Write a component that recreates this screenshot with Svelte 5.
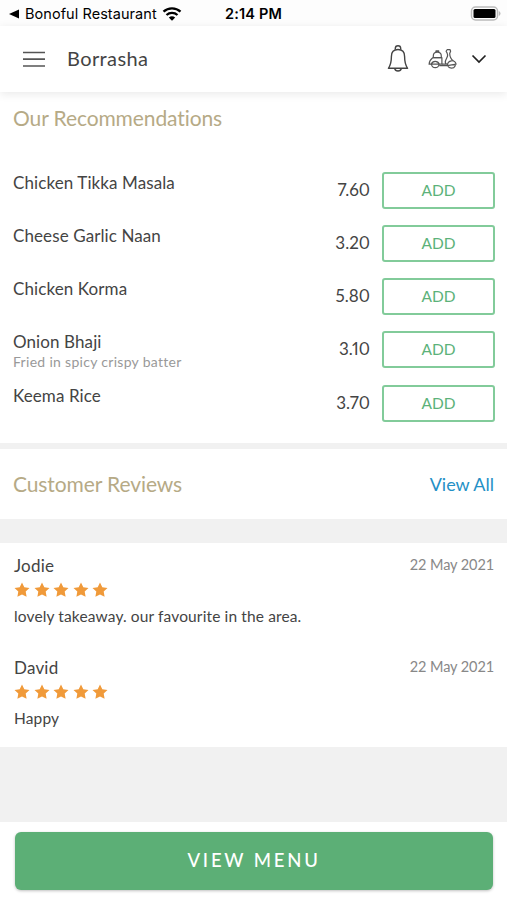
<script>
const recommendations = [
    { name: 'Chicken Tikka Masala', price: 7.6 },
    { name: 'Cheese Garlic Naan', price: 3.2 },
    { name: 'Chicken Korma', price: 5.8 },
    { name: 'Onion Bhaji', price: 3.1, note: 'Fried in spicy crispy batter' },
    { name: 'Keema Rice', price: 3.7 }
]

const reviews = [
    { author: 'Jodie', date: '22 May 2021', rating: 5, text: 'lovely takeaway. our favourite in the area.' },
    { author: 'David', date: '22 May 2021', rating: 5, text: 'Happy' }
]
</script>

<div class="screen">
    <div class="status">
        <div class="back">
            <svg width="10" height="10" viewBox="0 0 10 10"><path d="M10 0.5v9L0 5z" /></svg>
            <span>Bonoful Restaurant</span>
            <svg class="wifi" width="20" height="14" viewBox="0 0 20 14">
                <path d="M1.5 4.700a12.400 12.400 0 0 1 17 0M4.500 8a8.200 8.200 0 0 1 11 0" fill="none" stroke="#000" stroke-width="2.300" />
                <path d="M6.800 10.500a5 5 0 0 1 6.400 0L10 13.800z" />
            </svg>
        </div>
        <div class="clock">2:14 PM</div>
        <svg class="battery" width="31" height="15" viewBox="0 0 31 15">
            <rect x="1.500" y="1" width="26" height="13" rx="4" fill="#fff" stroke="#bbb" stroke-width="1.500" />
            <rect x="3.500" y="3" width="22" height="9" rx="1.500" />
            <path d="M28.800 5v5q1.700-.8 1.700-2.500T28.800 5z" fill="#bbb" />
        </svg>
    </div>

    <header>
        <svg class="burger" width="22" height="16" viewBox="0 0 22 16" stroke="#555" stroke-width="1.700"><path d="M0 1.500h22M0 8.200h22M0 15h22" /></svg>
        <h1>Borrasha</h1>
        <svg class="bell" width="24" height="30" viewBox="0 0 24 30" fill="none" stroke="#444" stroke-width="1.400" stroke-linejoin="round">
            <path d="M9.300 5.500V4.500a2.700 2.700 0 0 1 5.400 0v1" />
            <path d="M12 5.500c-4.200 0-6.600 2.800-6.600 7 0 5-.5 8.300-3 11.800h19.200c-2.500-3.500-3-6.800-3-11.800 0-4.200-2.400-7-6.600-7z" />
            <path d="M8.600 24.300a3.500 3.500 0 0 0 6.800 0" />
        </svg>
        <svg class="scooter" width="30" height="22" viewBox="0 0 30 22" fill="none" stroke="#555" stroke-width="1.200" stroke-linejoin="round">
            <path d="M5.300 9.700V8c0-2.300 1.600-3.900 4-3.900s4 1.600 4 3.900v1.700zM8 4.200V2.900h2.700v1.300" />
            <path d="M4.700 9.700h9.200v6.500h-2.700M4.700 9.700C2.500 11.300 1.300 13.600 1.100 16.200h2.200" />
            <path d="M3.200 16.200c.8-2 2.200-2.900 4-2.900s3.300.9 4.100 2.900zM3.500 16.500a3.800 3.800 0 0 0 7.500 0" />
            <path d="M11.200 17.700h8.200M14 16.200h4.600c-1.500-1-1.600-2.300-1-3.700l1.800-3.900c.5-1.300.1-2.700-.5-4l-.8-1.300 1-1.600h3l.5 1.500-.9 2.200c.1 3.100 1.200 5.700 3.700 7.400" />
            <path d="M19.400 17.700c0-2.600 1.600-4.600 4-4.900 2.300-.2 4.200 1.200 4.700 3.400zM19.800 17.800c1.200 3 5.900 3.200 7.300.1l.3-1.600" />
        </svg>
        <svg class="chevron" width="16" height="10" viewBox="0 0 16 10" fill="none" stroke="#222" stroke-width="1.700"><path d="M1.500 1.500L8 8l6.500-6.500" /></svg>
    </header>

    <section class="recommendations">
        <h2>Our Recommendations</h2>
        {#each recommendations as item}
        <div class="item">
            <div class="info">
                <div class="name">{item.name}</div>
                {#if item.note}<div class="note">{item.note}</div>{/if}
            </div>
            <div class="price">{item.price.toFixed(2)}</div>
            <button class="add">ADD</button>
        </div>
        {/each}
    </section>

    <section class="reviews-head">
        <h2>Customer Reviews</h2>
        <a href="#reviews">View All</a>
    </section>

    <section class="reviews" id="reviews">
        {#each reviews as review}
        <article>
            <div class="byline">
                <span class="author">{review.author}</span>
                <span class="date">{review.date}</span>
            </div>
            <div class="stars">
                {#each Array(review.rating) as _}
                <svg width="16" height="16" viewBox="0 0 16 16"><path d="M8 .5l2.300 4.700 5.200.7-3.800 3.600.9 5.300L8 12.400l-4.600 2.400.9-5.300L.5 5.900l5.200-.7z" /></svg>
                {/each}
            </div>
            <p>{review.text}</p>
        </article>
        {/each}
    </section>

    <footer>
        <button class="menu">VIEW MENU</button>
    </footer>
</div>

<style>
:global(body) {
    margin: 0;
    background: #f1f1f1;
}
.screen {
    display: flex;
    flex-direction: column;
    height: 900px;
    overflow: hidden;
    font-family: Lato, "Open Sans", sans-serif;
    font-variant-ligatures: none;
    color: #444;
}
h1, h2, p {
    margin: 0;
    font-weight: 400;
}
button {
    padding: 0;
    font-family: inherit;
    cursor: pointer;
}
section, footer {
    background: #fff;
}
.status {
    display: grid;
    grid-template-columns: 1fr auto 1fr;
    align-items: center;
    height: 26px;
    flex: none;
    box-sizing: border-box;
    padding: 1px 6px 0 9px;
    font-family: Inter, sans-serif;
    color: #000;
    background: #fdfdfd;
}
.back {
    display: flex;
    align-items: center;
    font-size: 14.5px;
    letter-spacing: 0.06px;
    white-space: nowrap;
}
.back span {
    margin: 0 5px 0 6px;
}
.clock {
    margin-right: 3px;
    font-size: 14.5px;
    font-weight: 600;
    letter-spacing: 0.15px;
}
.battery {
    justify-self: end;
}
header {
    display: flex;
    align-items: center;
    height: 66px;
    flex: none;
    padding: 0 20px 0 23px;
    background: #fff;
    box-shadow: 0 2px 9px rgba(0, 0, 0, 0.09);
    z-index: 1;
}
h1 {
    flex: 1;
    margin-left: 22px;
    padding-bottom: 2px;
    font-size: 20px;
    letter-spacing: 0.4px;
}
.bell {
    margin-right: 1px;
}
.scooter {
    margin: 0 13px 0 17px;
}
h2 {
    font-size: 21px;
    line-height: 26px;
    letter-spacing: -0.1px;
    color: #b6aa86;
}
.recommendations {
    height: 351px;
    flex: none;
    box-sizing: border-box;
    padding: 13px 12px 0 13px;
}
.recommendations h2 {
    margin-bottom: 42px;
}
.item {
    display: flex;
    height: 37px;
    margin-bottom: 16px;
}
.item:nth-of-type(4) {
    margin-bottom: 17px;
}
.info {
    flex: 1;
}
.name {
    font-size: 17px;
    line-height: 20px;
    letter-spacing: 0.1px;
}
.note {
    font-size: 14px;
    line-height: 20px;
    letter-spacing: 0.3px;
    color: #999;
}
.price {
    margin-right: 12px;
    font-size: 17px;
    font-variant-numeric: proportional-nums;
    line-height: 33px;
}
.add {
    width: 113px;
    height: 37px;
    margin-top: -1px;
    padding-bottom: 1px;
    border: 2px solid #82cb9a;
    border-radius: 3px;
    background: #fff;
    font-size: 15.5px;
    color: #5cb27a;
}
.reviews-head {
    display: flex;
    align-items: center;
    justify-content: space-between;
    height: 70px;
    flex: none;
    box-sizing: border-box;
    margin: 6px 0 24px;
    padding: 0 13px 1px;
}
.reviews-head a {
    font-size: 18px;
    color: #2490c6;
    text-decoration: none;
}
.reviews {
    height: 204px;
    flex: none;
    box-sizing: border-box;
    padding: 12px 13px 0 14px;
}
article {
    height: 102px;
}
.byline {
    display: flex;
    justify-content: space-between;
    line-height: 22px;
}
.author {
    font-size: 17px;
    letter-spacing: 0.2px;
}
.date {
    font-size: 14.5px;
    line-height: 19px;
    letter-spacing: -0.1px;
    color: #888;
}
.stars {
    display: flex;
    gap: 3.6px;
    height: 16px;
    margin-top: 5px;
}
.stars svg {
    fill: #f09a3a;
}
article p {
    margin-top: 7px;
    font-size: 15.5px;
    line-height: 22px;
    letter-spacing: 0.13px;
}
footer {
    height: 78px;
    flex: none;
    box-sizing: border-box;
    margin-top: auto;
    padding: 10px 14px 0 15px;
}
.menu {
    width: 100%;
    height: 58px;
    padding-bottom: 2px;
    border: 0;
    border-radius: 6px;
    background: #5caf76;
    box-shadow: 0 1px 3px rgba(0, 0, 0, 0.25);
    font-size: 18.5px;
    font-weight: 500;
    letter-spacing: 2.8px;
    color: #fff;
}
</style>
